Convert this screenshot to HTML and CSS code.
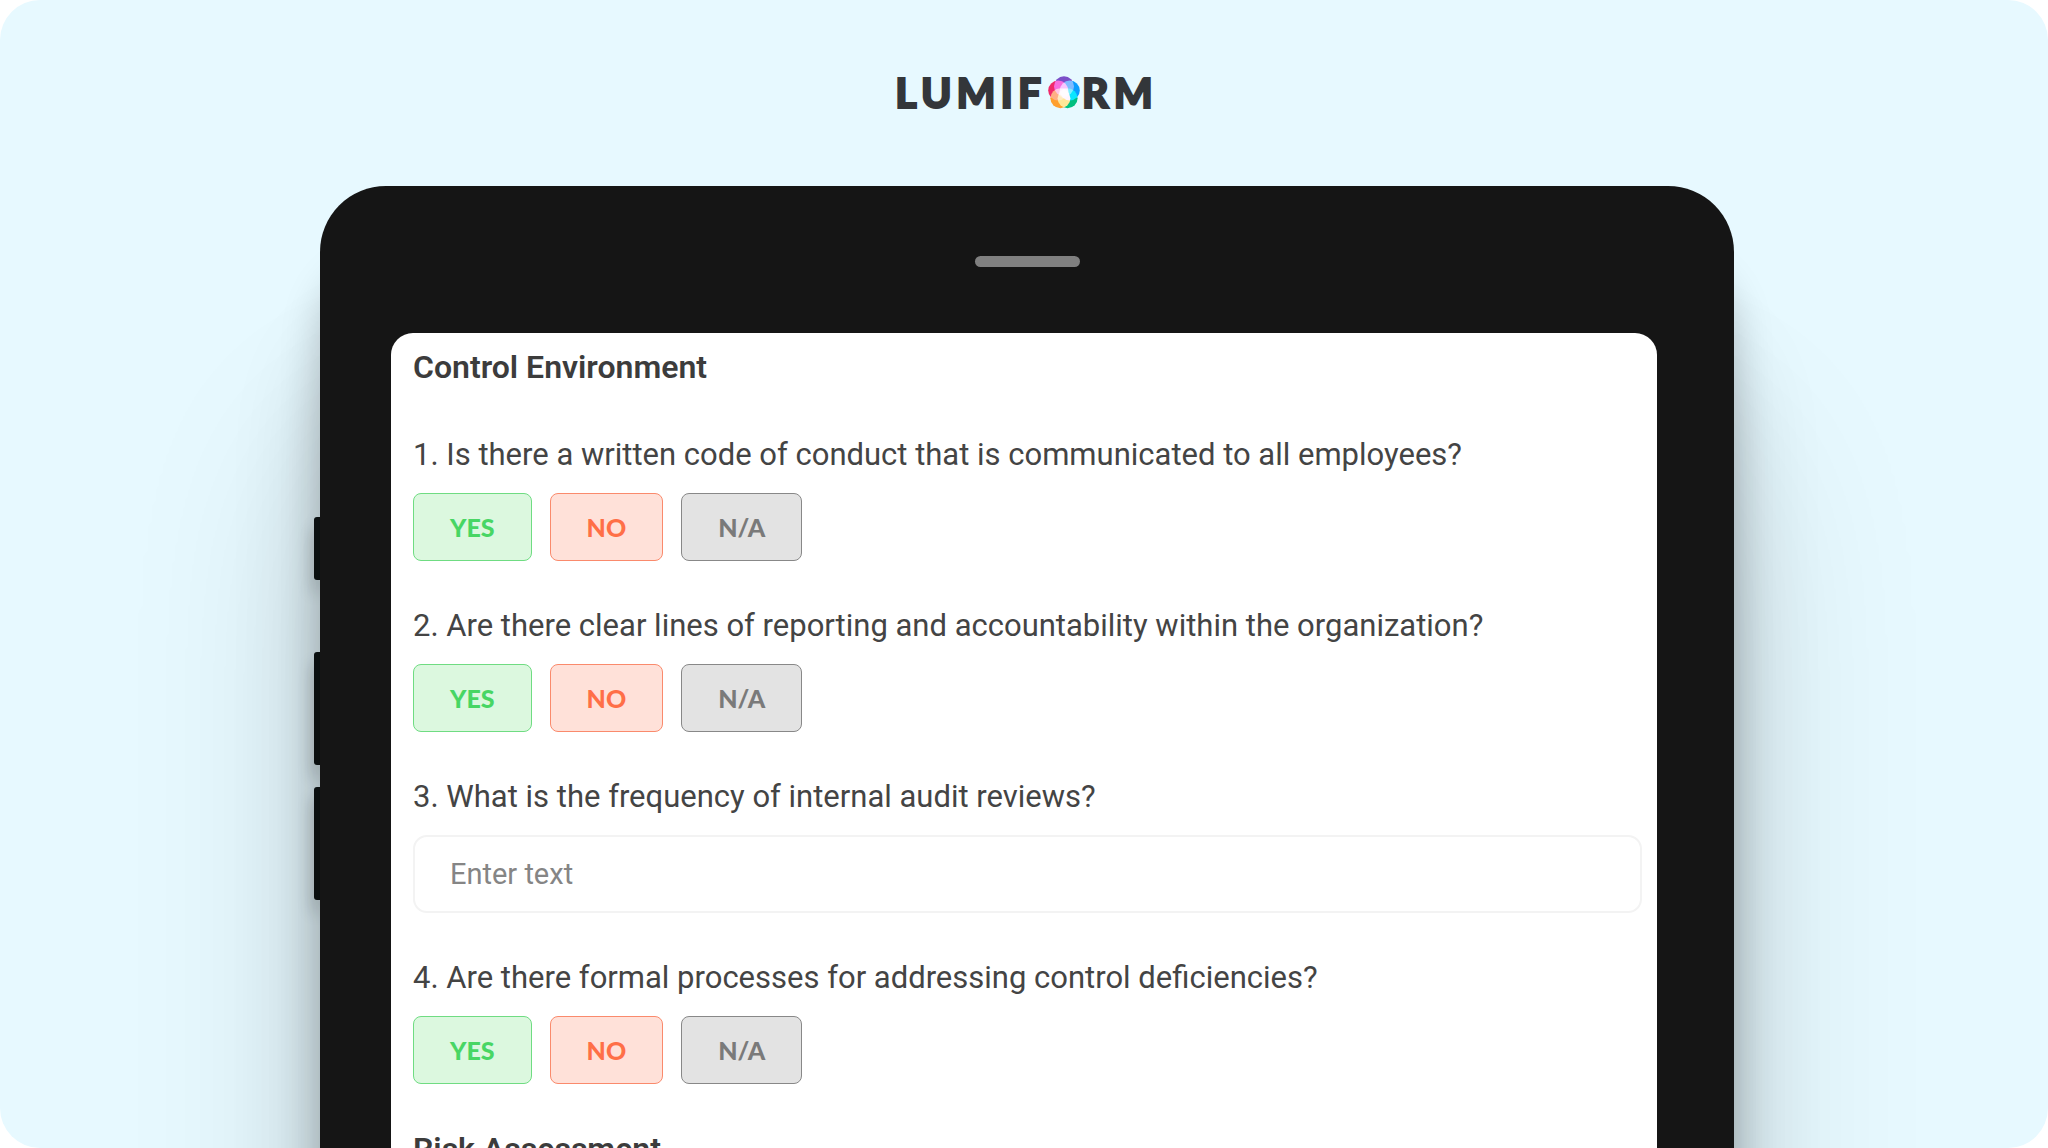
FILE: index.html
```html
<!DOCTYPE html>
<html lang="en">
<head>
    <meta charset="UTF-8">
    <meta name="viewport" content="width=device-width, initial-scale=1.0">
    <title>Lumiform - Internal Audit</title>
    <link rel="stylesheet" href="styles.css">
</head>
<body>

    <div class="stage">

        <!-- Logo -->
        <header class="logo">
            <span>LUMIF</span>
            <svg class="logo-mark" viewBox="0 0 32 33" aria-hidden="true">
                <circle cx="16" cy="10.2" r="10" fill="#7b4fc8"/>
                <circle cx="21.8" cy="14.5" r="10" fill="#0a9dff"/>
                <circle cx="19.6" cy="22.3" r="10" fill="#00bf80"/>
                <circle cx="12.4" cy="22.3" r="10" fill="#ffa02e"/>
                <circle cx="10.2" cy="14.5" r="10" fill="#f0286a"/>
                <circle cx="16" cy="17" r="5" fill="#fff" opacity="0.4"/>
            </svg>
            <span>RM</span>
        </header>

        <!-- Tablet -->
        <div class="tablet">
            <div class="side-keys">
                <span class="key key-short"></span>
                <span class="key"></span>
                <span class="key"></span>
            </div>

            <div class="frame">
                <div class="speaker"></div>

                <form class="screen">
                    <h2>Control Environment</h2>

                    <div class="question">
                        <p id="q1">1. Is there a written code of conduct that is communicated to all employees?</p>
                        <div class="answers" role="group" aria-labelledby="q1">
                            <button type="button" class="yes">YES</button>
                            <button type="button" class="no">NO</button>
                            <button type="button" class="na">N/A</button>
                        </div>
                    </div>

                    <div class="question">
                        <p id="q2">2. Are there clear lines of reporting and accountability within the organization?</p>
                        <div class="answers" role="group" aria-labelledby="q2">
                            <button type="button" class="yes">YES</button>
                            <button type="button" class="no">NO</button>
                            <button type="button" class="na">N/A</button>
                        </div>
                    </div>

                    <div class="question">
                        <label for="q3">3. What is the frequency of internal audit reviews?</label>
                        <input type="text" id="q3" placeholder="Enter text">
                    </div>

                    <div class="question">
                        <p id="q4">4. Are there formal processes for addressing control deficiencies?</p>
                        <div class="answers" role="group" aria-labelledby="q4">
                            <button type="button" class="yes">YES</button>
                            <button type="button" class="no">NO</button>
                            <button type="button" class="na">N/A</button>
                        </div>
                    </div>

                    <h2>Risk Assessment</h2>
                </form>
            </div>
        </div>

    </div>

</body>
</html>
```

FILE: styles.css
```css
* {
    margin: 0;
    padding: 0;
    box-sizing: border-box;
}

body {
    font-family: Roboto, Arial, sans-serif;
    background-color: #fff;
    color: #3c3c3c;
}

.stage {
    height: 100vh;
    overflow: hidden;
    background-color: #e7f9ff;
    border-radius: 40px;
    display: flex;
    flex-direction: column;
    align-items: center;
    padding-top: 64px;
}

/* Logo */
.logo {
    display: flex;
    align-items: center;
    flex-shrink: 0;
    gap: 2px;
    height: 56px;
    margin-bottom: 66px;
    padding-left: 5px;
    font-family: Lato, sans-serif;
    font-size: 41px;
    font-weight: 900;
    letter-spacing: 5px;
    color: #33363a;
    -webkit-text-stroke: 2px #33363a;
}

.logo-mark {
    width: 32px;
    height: 33px;
    isolation: isolate;
}

.logo-mark circle {
    mix-blend-mode: screen;
}

/* Tablet */
.tablet {
    display: flex;
    width: 70%;
    max-width: 1420px;
    flex-shrink: 0;
}

.side-keys {
    width: 6px;
    padding-top: 331px;
    display: flex;
    flex-direction: column;
    gap: 22px;
}

.key {
    height: 113px;
    background-color: #0e1516;
    border-radius: 3px 0 0 3px;
    box-shadow: 0 12px 16px rgba(0, 0, 0, 0.3);
}

.key-short {
    height: 63px;
    margin-bottom: 50px;
}

.frame {
    flex: 1;
    position: relative;
    background-color: #151515;
    border-radius: 66px 66px 0 0;
    padding-top: 70px;
    box-shadow: 0 260px 200px rgba(0, 0, 0, 0.14), 0 160px 90px rgba(0, 0, 0, 0.16), 0 80px 40px rgba(0, 0, 0, 0.2);
}

.speaker {
    width: 105px;
    height: 11px;
    margin: 0 auto 66px;
    background-color: #808080;
    border-radius: 6px;
}

/* Form */
.screen {
    margin: 0 77px 0 71px;
    background-color: #fff;
    border-radius: 22px 22px 0 0;
    padding: 14px 15px 45px 22px;
}

h2 {
    font-size: 32px;
    font-weight: 600;
    line-height: 40px;
    margin-bottom: 48px;
}

.question {
    margin-bottom: 45px;
}

.question p,
.question label {
    display: block;
    font-size: 31px;
    line-height: 40px;
    margin-bottom: 18px;
    color: #444;
}

.answers {
    display: flex;
    gap: 18px;
}

button {
    height: 68px;
    padding: 0 36px;
    border: 1px solid;
    border-radius: 8px;
    font-family: Lato, sans-serif;
    font-size: 25px;
    font-weight: 900;
    cursor: pointer;
}

.yes {
    background-color: #dcf8df;
    border-color: #6fdc82;
    color: #48d664;
}

.no {
    background-color: #ffe1d9;
    border-color: #fa8a6c;
    color: #ff6f47;
}

.na {
    background-color: #e3e3e3;
    border-color: #888;
    color: #7a7a7a;
}

input[type="text"] {
    display: block;
    width: 100%;
    height: 78px;
    padding: 0 35px;
    border: 2px solid #f3f3f3;
    border-radius: 14px;
    font-family: inherit;
    font-size: 29px;
    color: #3c3c3c;
}

input::placeholder {
    color: #858585;
}
```
